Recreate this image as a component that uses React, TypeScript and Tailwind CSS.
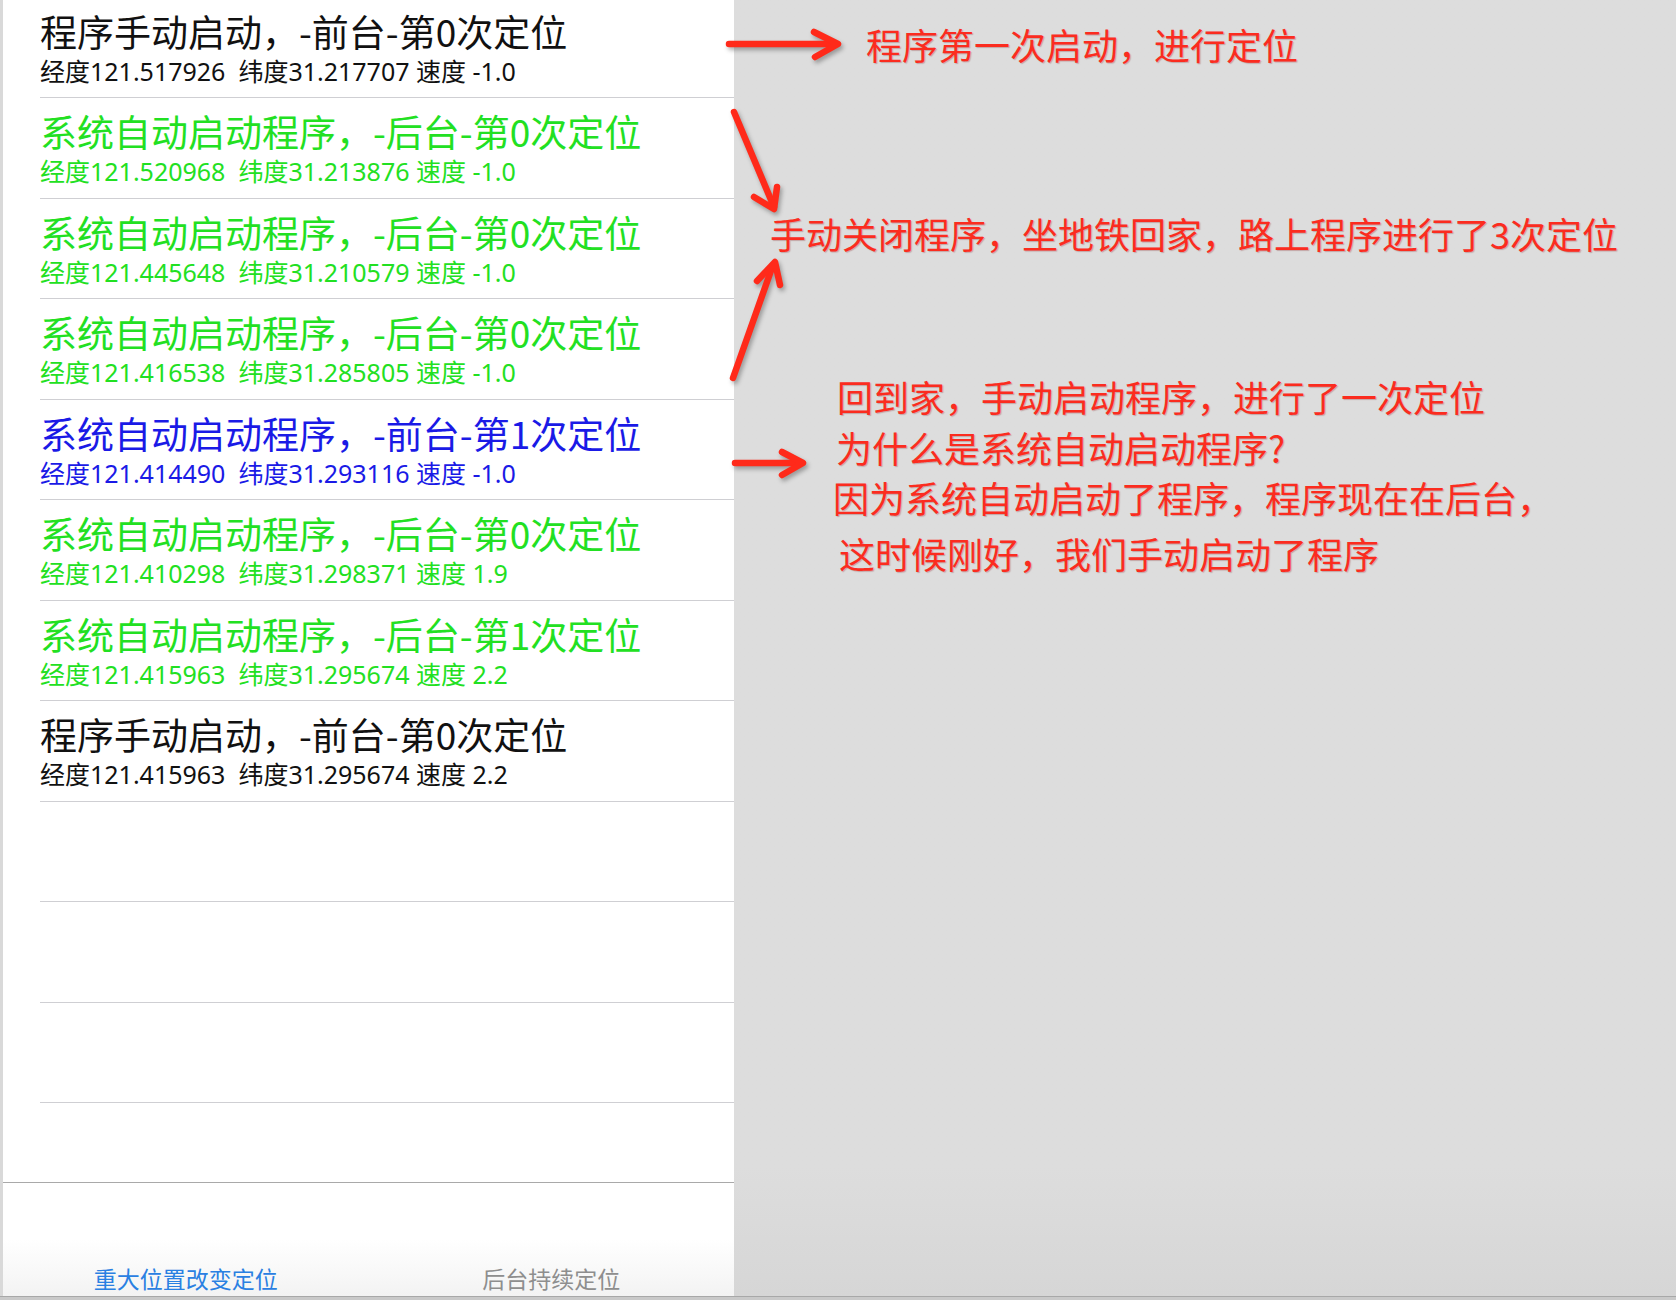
import React from "react";

type Row = { title: string; sub: string; color: string };

const rows: Row[] = [
  { title: "程序手动启动，-前台-第0次定位", sub: "经度121.517926  纬度31.217707 速度 -1.0", color: "text-[#111111]" },
  { title: "系统自动启动程序，-后台-第0次定位", sub: "经度121.520968  纬度31.213876 速度 -1.0", color: "text-[#22e022]" },
  { title: "系统自动启动程序，-后台-第0次定位", sub: "经度121.445648  纬度31.210579 速度 -1.0", color: "text-[#22e022]" },
  { title: "系统自动启动程序，-后台-第0次定位", sub: "经度121.416538  纬度31.285805 速度 -1.0", color: "text-[#22e022]" },
  { title: "系统自动启动程序，-前台-第1次定位", sub: "经度121.414490  纬度31.293116 速度 -1.0", color: "text-[#1a1ae6]" },
  { title: "系统自动启动程序，-后台-第0次定位", sub: "经度121.410298  纬度31.298371 速度 1.9", color: "text-[#22e022]" },
  { title: "系统自动启动程序，-后台-第1次定位", sub: "经度121.415963  纬度31.295674 速度 2.2", color: "text-[#22e022]" },
  { title: "程序手动启动，-前台-第0次定位", sub: "经度121.415963  纬度31.295674 速度 2.2", color: "text-[#111111]" },
];

function ListRow({ row }: { row?: Row }) {
  return (
    <div className="ml-[37px] h-[100.5px] box-border border-b border-[#cfcfd3]">
      {row && (
        <div className={row.color}>
          <div className="pt-[15px] text-[37px] leading-none font-['Noto_Sans_CJK_SC',sans-serif] whitespace-nowrap">
            {row.title}
          </div>
          <div className="mt-[9px] text-[25px] leading-none font-['Noto_Sans','Noto_Sans_CJK_SC',sans-serif] whitespace-pre">
            {row.sub}
          </div>
        </div>
      )}
    </div>
  );
}

const noteCls =
  "absolute whitespace-nowrap text-[36px] leading-none text-[#fb2c1f] font-['Noto_Sans_CJK_SC',sans-serif] [text-shadow:1px_1px_1px_rgba(120,0,0,0.25)]";

export default function App() {
  return (
    <div className="relative w-[1676px] h-[1300px] flex flex-col bg-[#dddddd] overflow-hidden">
      <div className="flex flex-1 min-h-0">
        <div className="w-[3px] bg-[#d9d9d9]" />
        <div className="w-[731px] bg-white flex flex-col">
          <div className="flex-1 min-h-0 overflow-hidden">
            <div className="mt-[-2.5px]">
              {rows.map((r, i) => (
                <ListRow key={i} row={r} />
              ))}
              <ListRow />
              <ListRow />
              <ListRow />
              <ListRow />
            </div>
          </div>
          <div className="h-[114px] border-t border-[#a9a9a9] bg-gradient-to-b from-white via-white to-[#f3f3f3] grid grid-cols-2 items-end pb-[6px] font-['Noto_Sans_CJK_SC',sans-serif] text-[23px] leading-none">
            <div className="text-center text-[#2a80e2]">重大位置改变定位</div>
            <div className="text-center text-[#8e8e8e]">后台持续定位</div>
          </div>
        </div>
        <div className="relative flex-1 bg-gradient-to-b from-[#dddddd] via-[#dddddd] via-90% to-[#d6d6d6]">
          <div className={noteCls} style={{ left: 132, top: 26 }}>程序第一次启动，进行定位</div>
          <div className={noteCls} style={{ left: 36, top: 215 }}>手动关闭程序，坐地铁回家，路上程序进行了3次定位</div>
          <div className={noteCls} style={{ left: 103, top: 378 }}>回到家，手动启动程序，进行了一次定位</div>
          <div className={noteCls} style={{ left: 102, top: 429 }}>为什么是系统自动启动程序?</div>
          <div className={noteCls} style={{ left: 99, top: 479 }}>因为系统自动启动了程序，程序现在在后台，</div>
          <div className={noteCls} style={{ left: 105, top: 535 }}>这时候刚好，我们手动启动了程序</div>
        </div>
      </div>
      <div className="h-[4px] border-t border-[#a8a8a8] bg-[#c9c9c9]" />

      <svg
        className="absolute left-0 top-0 pointer-events-none drop-shadow-[2px_3px_2px_rgba(0,0,0,0.3)]"
        width="1676"
        height="1300"
        viewBox="0 0 1676 1300"
      >
        <g fill="none" stroke="#ff2a1a" strokeWidth="6.5" strokeLinecap="round" strokeLinejoin="round">
          <path d="M729 44 L835 44" />
          <path d="M814 32 L838 44 L815 57" />
          <path d="M734 112 L774 207" />
          <path d="M754 197 L774 209 L777 187" />
          <path d="M733 378 L773 265" />
          <path d="M757 281 L775 262 L780 285" />
          <path d="M735 463 L800 463" />
          <path d="M782 452 L803 463 L782 475" />
        </g>
      </svg>
    </div>
  );
}
